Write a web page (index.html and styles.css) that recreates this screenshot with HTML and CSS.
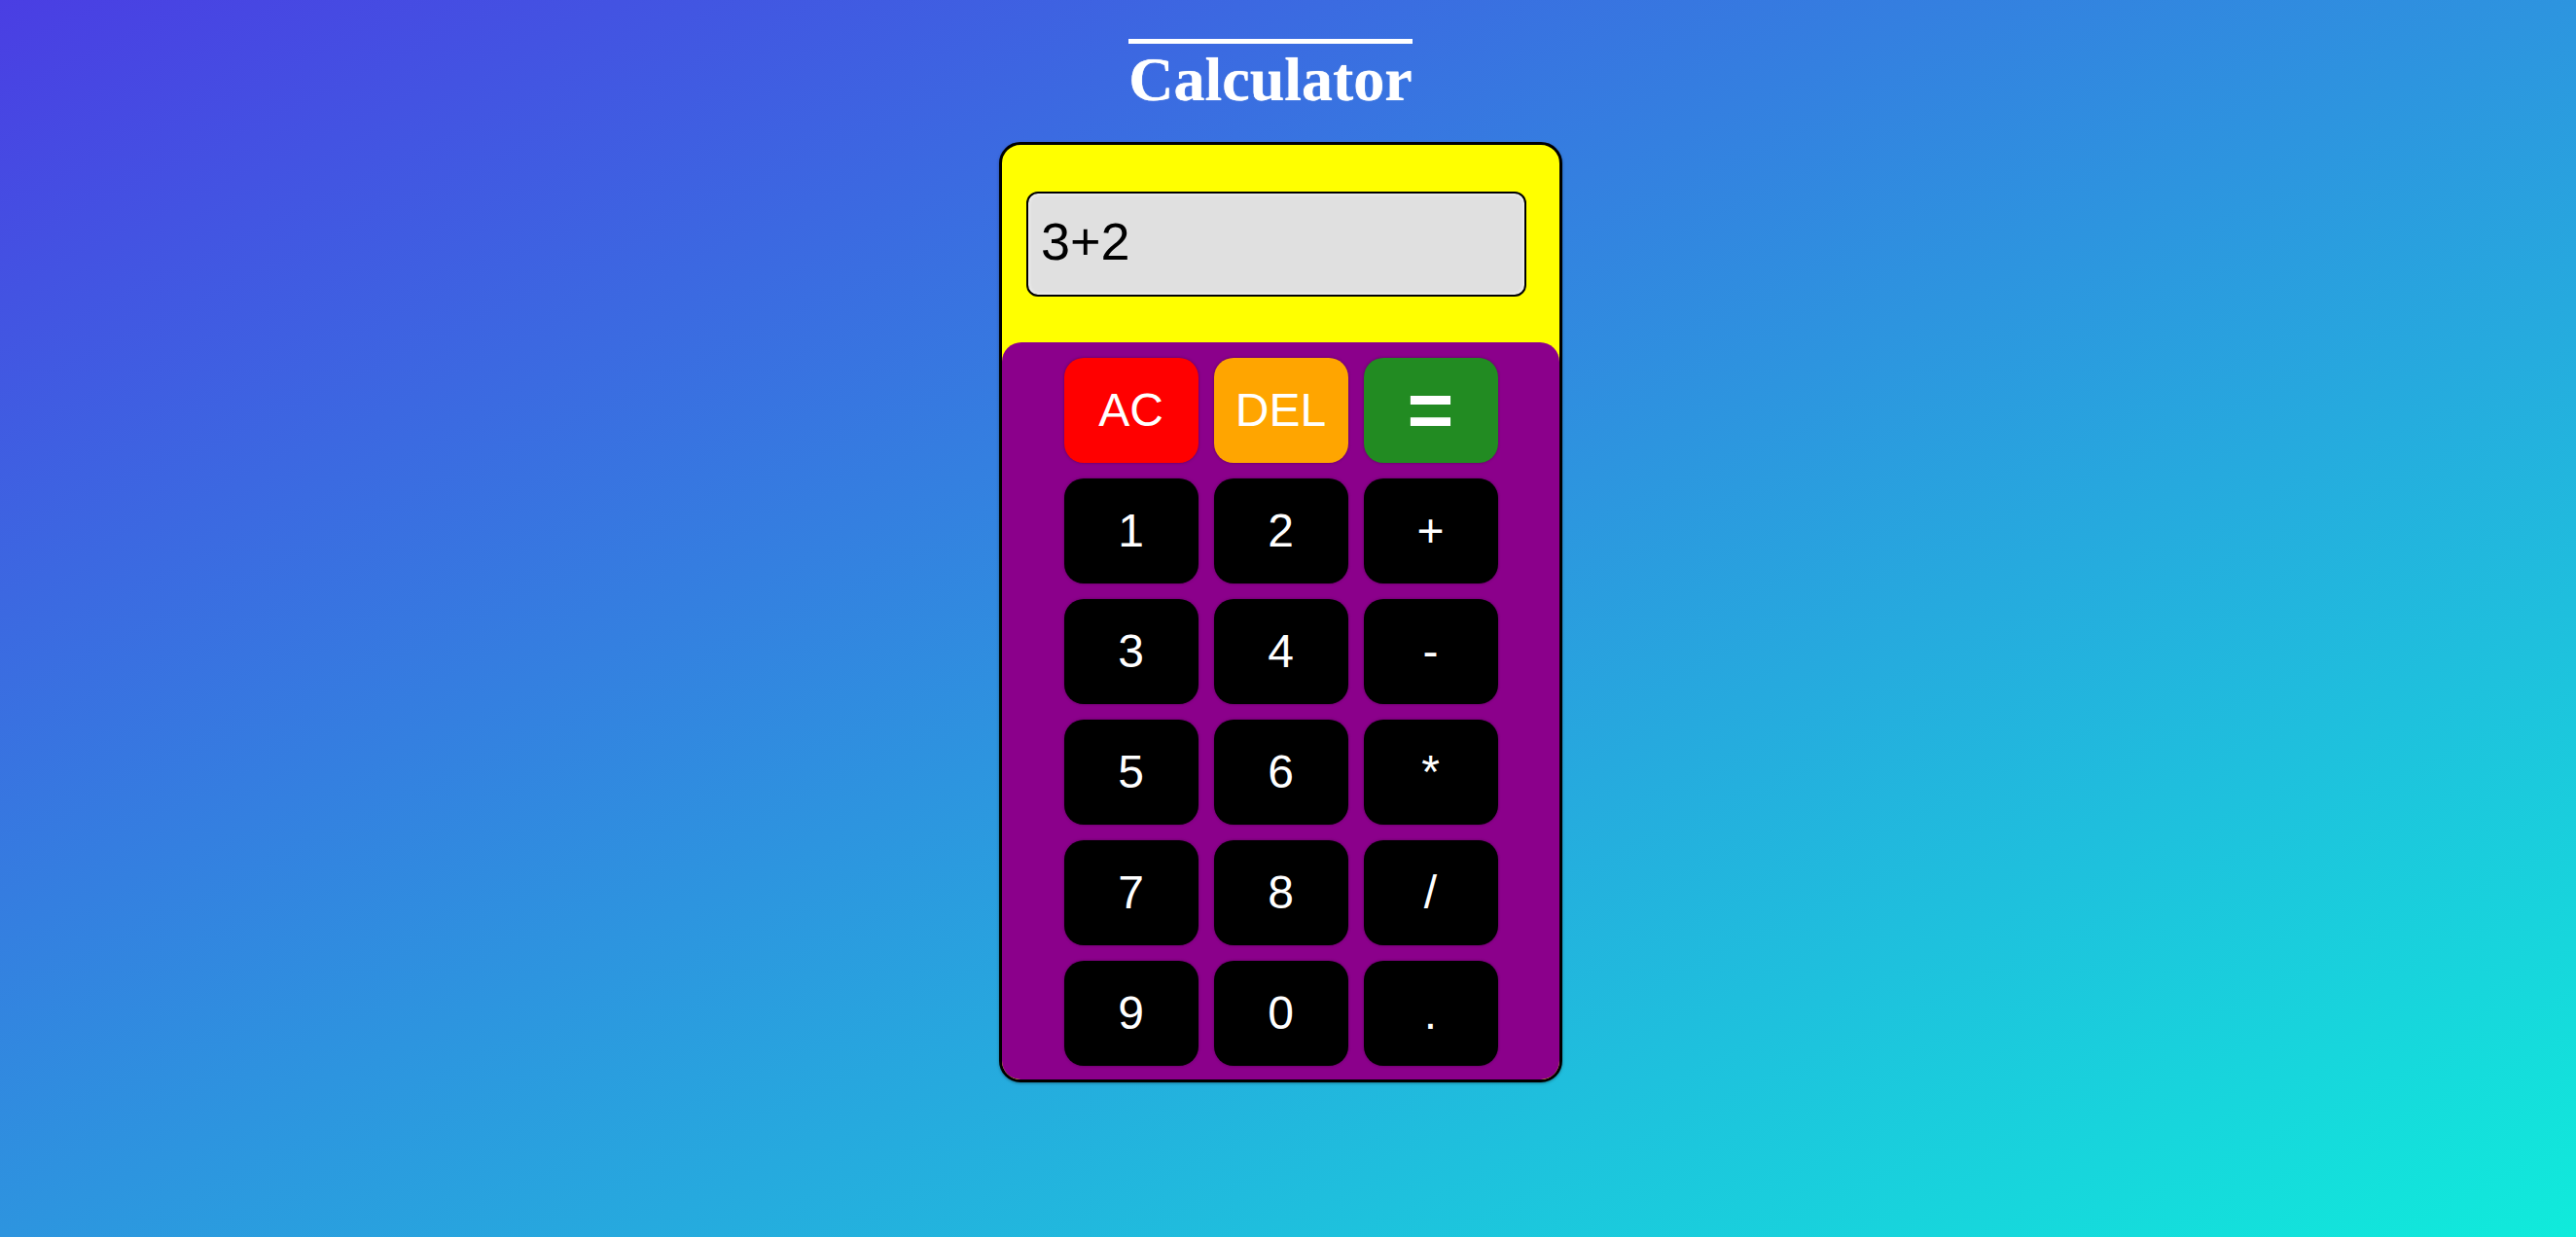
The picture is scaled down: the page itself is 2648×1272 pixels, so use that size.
FILE: index.html
```html
<!DOCTYPE html>
<html lang="en">
<head>
<meta charset="utf-8">
<title>Calculator</title>
<link rel="stylesheet" href="styles.css">
</head>
<body>
<main class="page">
  <h1 class="title">Calculator</h1>
  <div class="calc">
    <div class="screen-area">
      <div class="display">3+2</div>
    </div>
    <div class="keypad">
      <button class="key key-ac">AC</button>
      <button class="key key-del">DEL</button>
      <button class="key key-eq">=</button>
      <button class="key">1</button>
      <button class="key">2</button>
      <button class="key">+</button>
      <button class="key">3</button>
      <button class="key">4</button>
      <button class="key">-</button>
      <button class="key">5</button>
      <button class="key">6</button>
      <button class="key">*</button>
      <button class="key">7</button>
      <button class="key">8</button>
      <button class="key">/</button>
      <button class="key">9</button>
      <button class="key">0</button>
      <button class="key">.</button>
    </div>
  </div>
</main>
</body>
</html>
```

FILE: styles.css
```css
html, body {
  margin: 0;
  padding: 0;
  height: 100%;
}
body {
  background: linear-gradient(to bottom right, #4a3ee3, #10ebdb);
  font-family: "Liberation Sans", Arial, sans-serif;
  overflow: hidden;
}
.page {
  display: flex;
  flex-direction: column;
  align-items: center;
  padding-top: 40px;
}
.title {
  margin: 0 36px 27px 0;
  border-top: 5px solid #fff;
  font-family: "Liberation Serif", "Times New Roman", serif;
  font-weight: 900;
  font-size: 64px;
  color: #fff;
  line-height: 1.15;
  text-shadow: 0 0 1px #fff;
}
.calc {
  margin-right: 15px;
  width: 573px;
  border: 3px solid #000;
  border-radius: 22px;
  background: #ffff00;
  box-shadow: 0 1px 3px rgba(0,0,0,0.35);
  overflow: hidden;
}
.screen-area {
  padding: 48px 0 47px 25px;
}
.display {
  box-sizing: border-box;
  width: 514px;
  height: 108px;
  border: 2px solid #000;
  border-radius: 12px;
  background: #e0e0e0;
  box-shadow: inset 0 0 4px rgba(255,255,255,0.9);
  font-size: 54px;
  color: #000;
  padding-left: 13px;
  display: flex;
  align-items: center;
  padding-bottom: 6px;
}
.keypad {
  background: #8b008b;
  border-radius: 20px 20px 0 0;
  padding: 16px 0 14px;
  display: grid;
  grid-template-columns: repeat(3, 138px);
  grid-auto-rows: 108px;
  gap: 16px;
  justify-content: center;
}
.key {
  border: none;
  border-radius: 20px;
  background: #000;
  color: #fff;
  font-family: "Liberation Sans", Arial, sans-serif;
  font-size: 48px;
  padding: 0;
  box-shadow: 0 0 3px rgba(60,0,60,0.6);
}
.key-ac { background: #ff0000; }
.key-del { background: #ffa500; }
.key-eq {
  background: #228b22;
  font-weight: bold;
  font-size: 82px;
}
```
